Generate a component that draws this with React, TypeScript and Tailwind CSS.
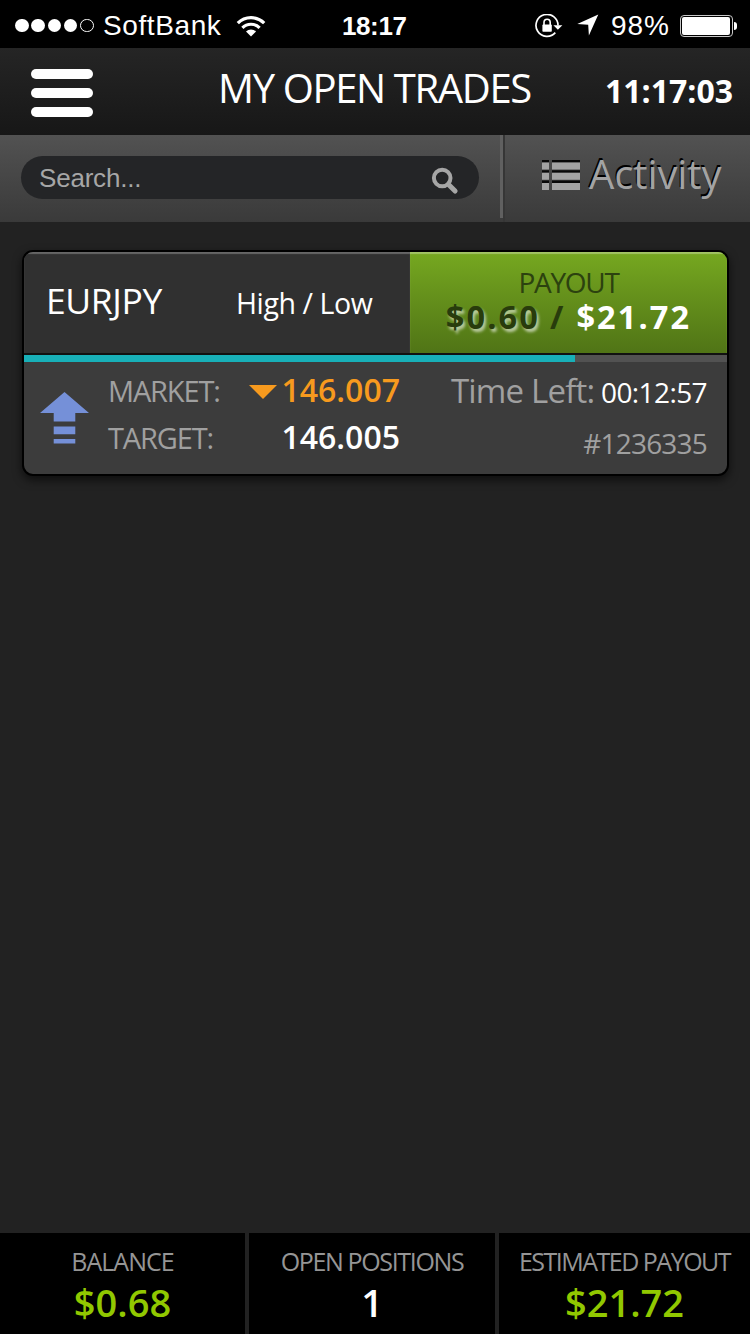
const SignalDots = () => (
  <div className="flex w-[80px] gap-[2.8px]">
    {[true, true, true, true, false].map((filled, i) => (
      <span
        key={i}
        className={
          filled
            ? "size-[13.5px] rounded-full bg-white"
            : "size-[13.5px] rounded-full border border-white"
        }
      />
    ))}
  </div>
);

const WifiIcon = () => (
  <svg width="30" height="22" viewBox="0 0 30 22" fill="none" stroke="#fff">
    <path d="M1.8 8.2a18.5 18.5 0 0 1 26.4 0" strokeWidth="3.2" />
    <path d="M6.4 12.9a12 12 0 0 1 17.2 0" strokeWidth="3.2" />
    <path d="M15 21.6l-5-5.1a7 7 0 0 1 10 0z" fill="#fff" stroke="none" />
  </svg>
);

const RotationLockIcon = () => (
  <svg width="28" height="24" viewBox="0 0 28 24" fill="none">
    <path
      d="M20.3 18.6A11 11 0 1 1 23 11.5"
      stroke="#fff"
      strokeWidth="1.7"
    />
    <path d="M18.4 11.2h9l-4.5 4.6z" fill="#fff" />
    <path d="M9 11V8.6a3.1 3.4 0 0 1 6.2 0V11" stroke="#fff" strokeWidth="1.6" />
    <rect x="7.4" y="10.6" width="9.4" height="7.2" rx="0.8" fill="#fff" />
  </svg>
);

const LocationIcon = () => (
  <svg width="22" height="22" viewBox="0 0 22 22" fill="#fff">
    <path d="M21.3 0.6L0.3 10.1l10.9 0.6 0.7 10.9z" />
  </svg>
);

const Battery = () => (
  <div className="flex items-center gap-px">
    <div className="h-[22px] w-[53px] rounded-[4px] border border-[#c8c8c8] p-px">
      <div className="h-full w-[48px] rounded-[2px] bg-white" />
    </div>
    <div className="h-[8px] w-[3px] rounded-r-full bg-white" />
  </div>
);

const StatusBar = () => (
  <div className="flex h-[48px] items-center bg-black pt-[3px] pl-[15px] font-['Liberation_Sans',sans-serif] text-[28px] leading-[48px] text-white">
    <SignalDots />
    <span className="ml-[8px] w-[133px] tracking-[0.6px]">SoftBank</span>
    <WifiIcon />
    <span className="ml-[76px] w-[193px] text-[26px] font-bold tracking-[-0.4px]">
      18:17
    </span>
    <RotationLockIcon />
    <span className="ml-[14px] pb-[2px]">
      <LocationIcon />
    </span>
    <span className="ml-[12px] w-[69px] tracking-[0.9px]">98%</span>
    <Battery />
  </div>
);

const Header = () => (
  <header className="flex h-[87px] items-center bg-linear-to-b from-[#252525] to-[#171717] pl-[31px] text-white">
    <button className="flex w-[187px] flex-col gap-[9px] pt-[3px]">
      <span className="h-[10px] w-[62px] rounded-full bg-white" />
      <span className="h-[10px] w-[62px] rounded-full bg-white" />
      <span className="h-[10px] w-[62px] rounded-full bg-white" />
    </button>
    <h1 className="w-[387px] pb-[8px] text-[40px] leading-[60px] tracking-[-1.35px]">
      MY OPEN TRADES
    </h1>
    <span className="pb-[2px] text-[32px] leading-[60px] font-bold">11:17:03</span>
  </header>
);

const SearchIcon = () => (
  <svg width="28" height="28" viewBox="0 0 28 28" fill="none" stroke="#a6a6a6">
    <circle cx="11.2" cy="11" r="8.3" strokeWidth="4" />
    <path d="M17.5 17.5l6.6 6.6" strokeWidth="5" strokeLinecap="round" />
  </svg>
);

const ListIcon = () => (
  <svg width="38" height="31" viewBox="0 0 38 31">
    {[0, 10.3, 20.6].map((y) => (
      <g key={y}>
        <path d={`M0 ${y}h7v2.4h-7zM10 ${y}h28v2.4h-28z`} fill="#080808" />
        <path d={`M0 ${y + 2.4}h7v7h-7zM10 ${y + 2.4}h28v7h-28z`} fill="#a3a3a3" />
      </g>
    ))}
  </svg>
);

const Toolbar = () => (
  <div className="flex h-[87px] bg-linear-to-b from-[#525252] to-[#3a3a3a]">
    <div className="w-[500px] pt-[21px] pl-[21px]">
      <div className="flex h-[43px] w-[458px] items-center justify-between rounded-full bg-[#242527] pr-[20px] pl-[18px]">
        <span className="font-['Liberation_Sans',sans-serif] text-[26px] leading-[42px] tracking-[-0.2px] text-[#a6a6a6]">
          Search...
        </span>
        <span className="pt-[6px]">
          <SearchIcon />
        </span>
      </div>
    </div>
    <div className="h-[83px] w-[3px] bg-[#606060]" />
    <div className="w-[2px] bg-[#363636]" />
    <div className="flex h-[80px] items-center pl-[37px]">
      <ListIcon />
      <span className="ml-[9px] pb-[2px] text-[40px] leading-[60px] tracking-[-0.1px] text-[#a3a3a3] [text-shadow:-1px_-2px_0_#000]">
        Activity
      </span>
    </div>
  </div>
);

const UpArrow = () => (
  <svg width="49" height="52" viewBox="0 0 49 52" fill="#7590d8">
    <path d="M24.5 0L49 21H35.3v8.6H13.7V21H0z" />
    <path d="M13.7 34.6h21.6v7.6H13.7zM13.7 47h21.6v4.4H13.7z" />
  </svg>
);

const TradeCard = () => (
  <div className="mx-[22px] mt-[28px] flex h-[226px] w-[707px] flex-col overflow-hidden rounded-[11px] border-2 border-black bg-[#3c3c3c] shadow-[0_4px_10px_rgba(0,0,0,0.6)]">
    <div className="flex h-[101px] shrink-0 text-white">
      <div className="flex w-[386px] items-center bg-[#303030] pl-[22px] shadow-[inset_0_2px_1px_#666]">
        <span className="w-[190px] pb-[6px] text-[35.5px] leading-[48px] tracking-[-0.4px]">
          EURJPY
        </span>
        <span className="pt-[1px] text-[28.5px] leading-[48px] tracking-[-0.4px]">
          High / Low
        </span>
      </div>
      <div className="flex flex-1 flex-col items-center bg-linear-to-b from-[#76a820] to-[#507416] pt-[13px] shadow-[inset_0_2px_1px_#a2c464]">
        <span className="text-[28px] leading-[34px] tracking-[-1.3px] text-[#2c420f]">
          PAYOUT
        </span>
        <span className="text-[32.5px] leading-[35px] font-bold tracking-[2.1px] whitespace-pre">
          <span className="text-[#283c0c] [text-shadow:2px_3px_3px_rgba(255,255,255,0.6)]">
            $0.60
          </span>
          <span className="mr-[11px] ml-[10px] text-[#283c0c]">/</span>
          $21.72
        </span>
      </div>
    </div>
    <div className="h-[2px] shrink-0 bg-[#111]" />
    <div className="h-[7px] shrink-0 bg-[#525252]">
      <div className="h-full w-[551px] bg-[#18b0b8]" />
    </div>
    <div className="flex flex-1 pl-[16px] text-[#a0a0a0]">
      <div className="w-[68px] pt-[30px]">
        <UpArrow />
      </div>
      <div className="w-[142px] pt-[5px] text-[29px] leading-[47px] tracking-[-1.15px]">
        <p>MARKET:</p>
        <p>TARGET:</p>
      </div>
      <div className="flex w-[150px] flex-col items-end pt-[4px] text-[32px] leading-[47px] font-semibold">
        <p className="flex items-center gap-[4px] text-[#f79a1e]">
          <span className="pt-[4px]">
            <svg width="28" height="14" viewBox="0 0 28 14" fill="#f79a1e">
              <path d="M0 0h28L14 14z" />
            </svg>
          </span>
          146.007
        </p>
        <p className="text-white">146.005</p>
      </div>
      <div className="w-[307px] pt-[5px] text-right text-[28px] leading-[47px] tracking-[-0.6px]">
        <p>
          <span className="text-[33px] tracking-[-0.8px]">Time Left:</span>{" "}
          <span className="text-white">00:12:57</span>
        </p>
        <p className="pt-[4px] tracking-[-0.8px]">#1236335</p>
      </div>
    </div>
  </div>
);

const Footer = () => (
  <footer className="flex h-[101px] gap-[4px] bg-[#222] text-center">
    <div className="w-[245px] bg-black pt-[11px]">
      <p className="text-[25px] leading-[34px] tracking-[-1px] text-[#959595]">BALANCE</p>
      <p className="text-[38px] leading-[48px] font-semibold text-[#91c800]">$0.68</p>
    </div>
    <div className="w-[246px] bg-black pt-[11px]">
      <p className="text-[25px] leading-[34px] tracking-[-1.35px] text-[#959595]">
        OPEN POSITIONS
      </p>
      <p className="text-[38px] leading-[48px] font-semibold text-white">1</p>
    </div>
    <div className="flex-1 bg-black pt-[11px]">
      <p className="text-[25px] leading-[34px] tracking-[-1.5px] text-[#959595]">
        ESTIMATED PAYOUT
      </p>
      <p className="text-[38px] leading-[48px] font-semibold text-[#91c800]">$21.72</p>
    </div>
  </footer>
);

export default function App() {
  return (
    <div className="flex h-[1334px] w-[750px] flex-col overflow-hidden bg-[#222] font-['Open_Sans','Noto_Sans',sans-serif] whitespace-nowrap">
      <StatusBar />
      <Header />
      <Toolbar />
      <main className="flex-1">
        <TradeCard />
      </main>
      <Footer />
    </div>
  );
}
